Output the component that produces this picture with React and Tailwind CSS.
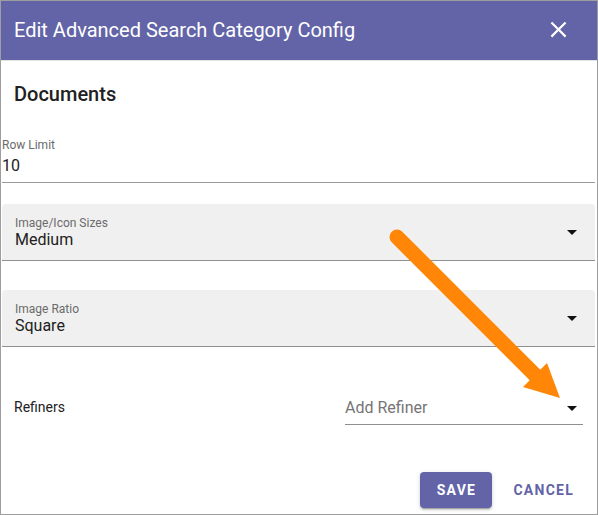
import React from "react";

const DropArrow = () => (
  <svg width="24" height="24" viewBox="0 0 24 24" className="shrink-0">
    <path d="M7 10l5 5 5-5z" fill="#111" />
  </svg>
);

const FilledSelect = ({ label, value }) => (
  <div className="ml-px mr-[2px] h-[57px] bg-[#f0f0f0] rounded-t-[4px] border-b border-[#8f8f8f] flex items-center justify-between pl-[13px] pr-[11px]">
    <div className="flex flex-col">
      <span className="text-[12px] leading-[14px] text-[#6b6b6b]">{label}</span>
      <span className="text-[16px] leading-[19px] text-[#212121]">{value}</span>
    </div>
    <DropArrow />
  </div>
);

export default function App() {
  return (
    <div className="relative w-[598px] h-[515px] border border-[#9e9e9e] bg-white font-['Roboto',sans-serif] overflow-hidden">
      {/* header */}
      <div className="h-[60px] bg-[#6264a7] border-b border-[#e3e3e3] flex items-center justify-between pl-[13px] pr-[25px] pb-[2px]">
        <h1 className="text-[20px] leading-[24px] text-white">Edit Advanced Search Category Config</h1>
        <svg width="27" height="27" viewBox="0 0 24 24">
          <path
            fill="#fff"
            d="M19 6.41L17.59 5 12 10.59 6.41 5 5 6.41 10.59 12 5 17.59 6.41 19 12 13.41 17.59 19 19 17.59 13.41 12z"
          />
        </svg>
      </div>

      <h2 className="mt-[17px] ml-[13px] text-[20px] leading-[32px] font-medium text-[#212121]">Documents</h2>

      {/* row limit */}
      <div className="mt-[27px] ml-px mr-[2px] border-b border-[#9a9a9a] pb-[7px]">
        <div className="text-[12px] leading-[16px] text-[#6b6b6b]">Row Limit</div>
        <div className="mt-[3px] text-[16px] leading-[19px] text-[#212121]">10</div>
      </div>

      <div className="mt-[21px]">
        <FilledSelect label="Image/Icon Sizes" value="Medium" />
      </div>
      <div className="mt-[29px]">
        <FilledSelect label="Image Ratio" value="Square" />
      </div>

      {/* refiners */}
      <div className="mt-[51px] flex items-start justify-between pl-[13px] pr-[14px]">
        <span className="text-[14px] leading-[19px] text-[#212121]">Refiners</span>
        <div className="w-[238px] border-b border-[#8f8f8f] pb-[7px] flex items-center justify-between">
          <span className="text-[16px] leading-[19px] text-[#757575]">Add Refiner</span>
          <span className="-mr-px h-[19px] flex items-center">
            <DropArrow />
          </span>
        </div>
      </div>

      {/* actions */}
      <div className="mt-[47px] flex justify-end items-center gap-[13px] pr-[15px]">
        <button className="h-[36px] w-[72px] rounded-[4px] bg-[#6264a7] text-white text-[14px] font-bold tracking-[1.25px] shadow-[0_3px_1px_-2px_rgba(0,0,0,0.2),0_2px_2px_0_rgba(0,0,0,0.14),0_1px_5px_0_rgba(0,0,0,0.12)]">
          SAVE
        </button>
        <button className="h-[36px] px-[8px] text-[#6264a7] text-[14px] font-bold tracking-[1.25px]">
          CANCEL
        </button>
      </div>

      {/* annotation arrow */}
      <svg className="absolute -left-px -top-px pointer-events-none" width="598" height="515">
        <line x1="397" y1="237" x2="537" y2="377" stroke="#ff8606" strokeWidth="15" strokeLinecap="round" />
        <polygon points="547,363 523,387 560,398" fill="#ff8606" />
      </svg>
    </div>
  );
}
